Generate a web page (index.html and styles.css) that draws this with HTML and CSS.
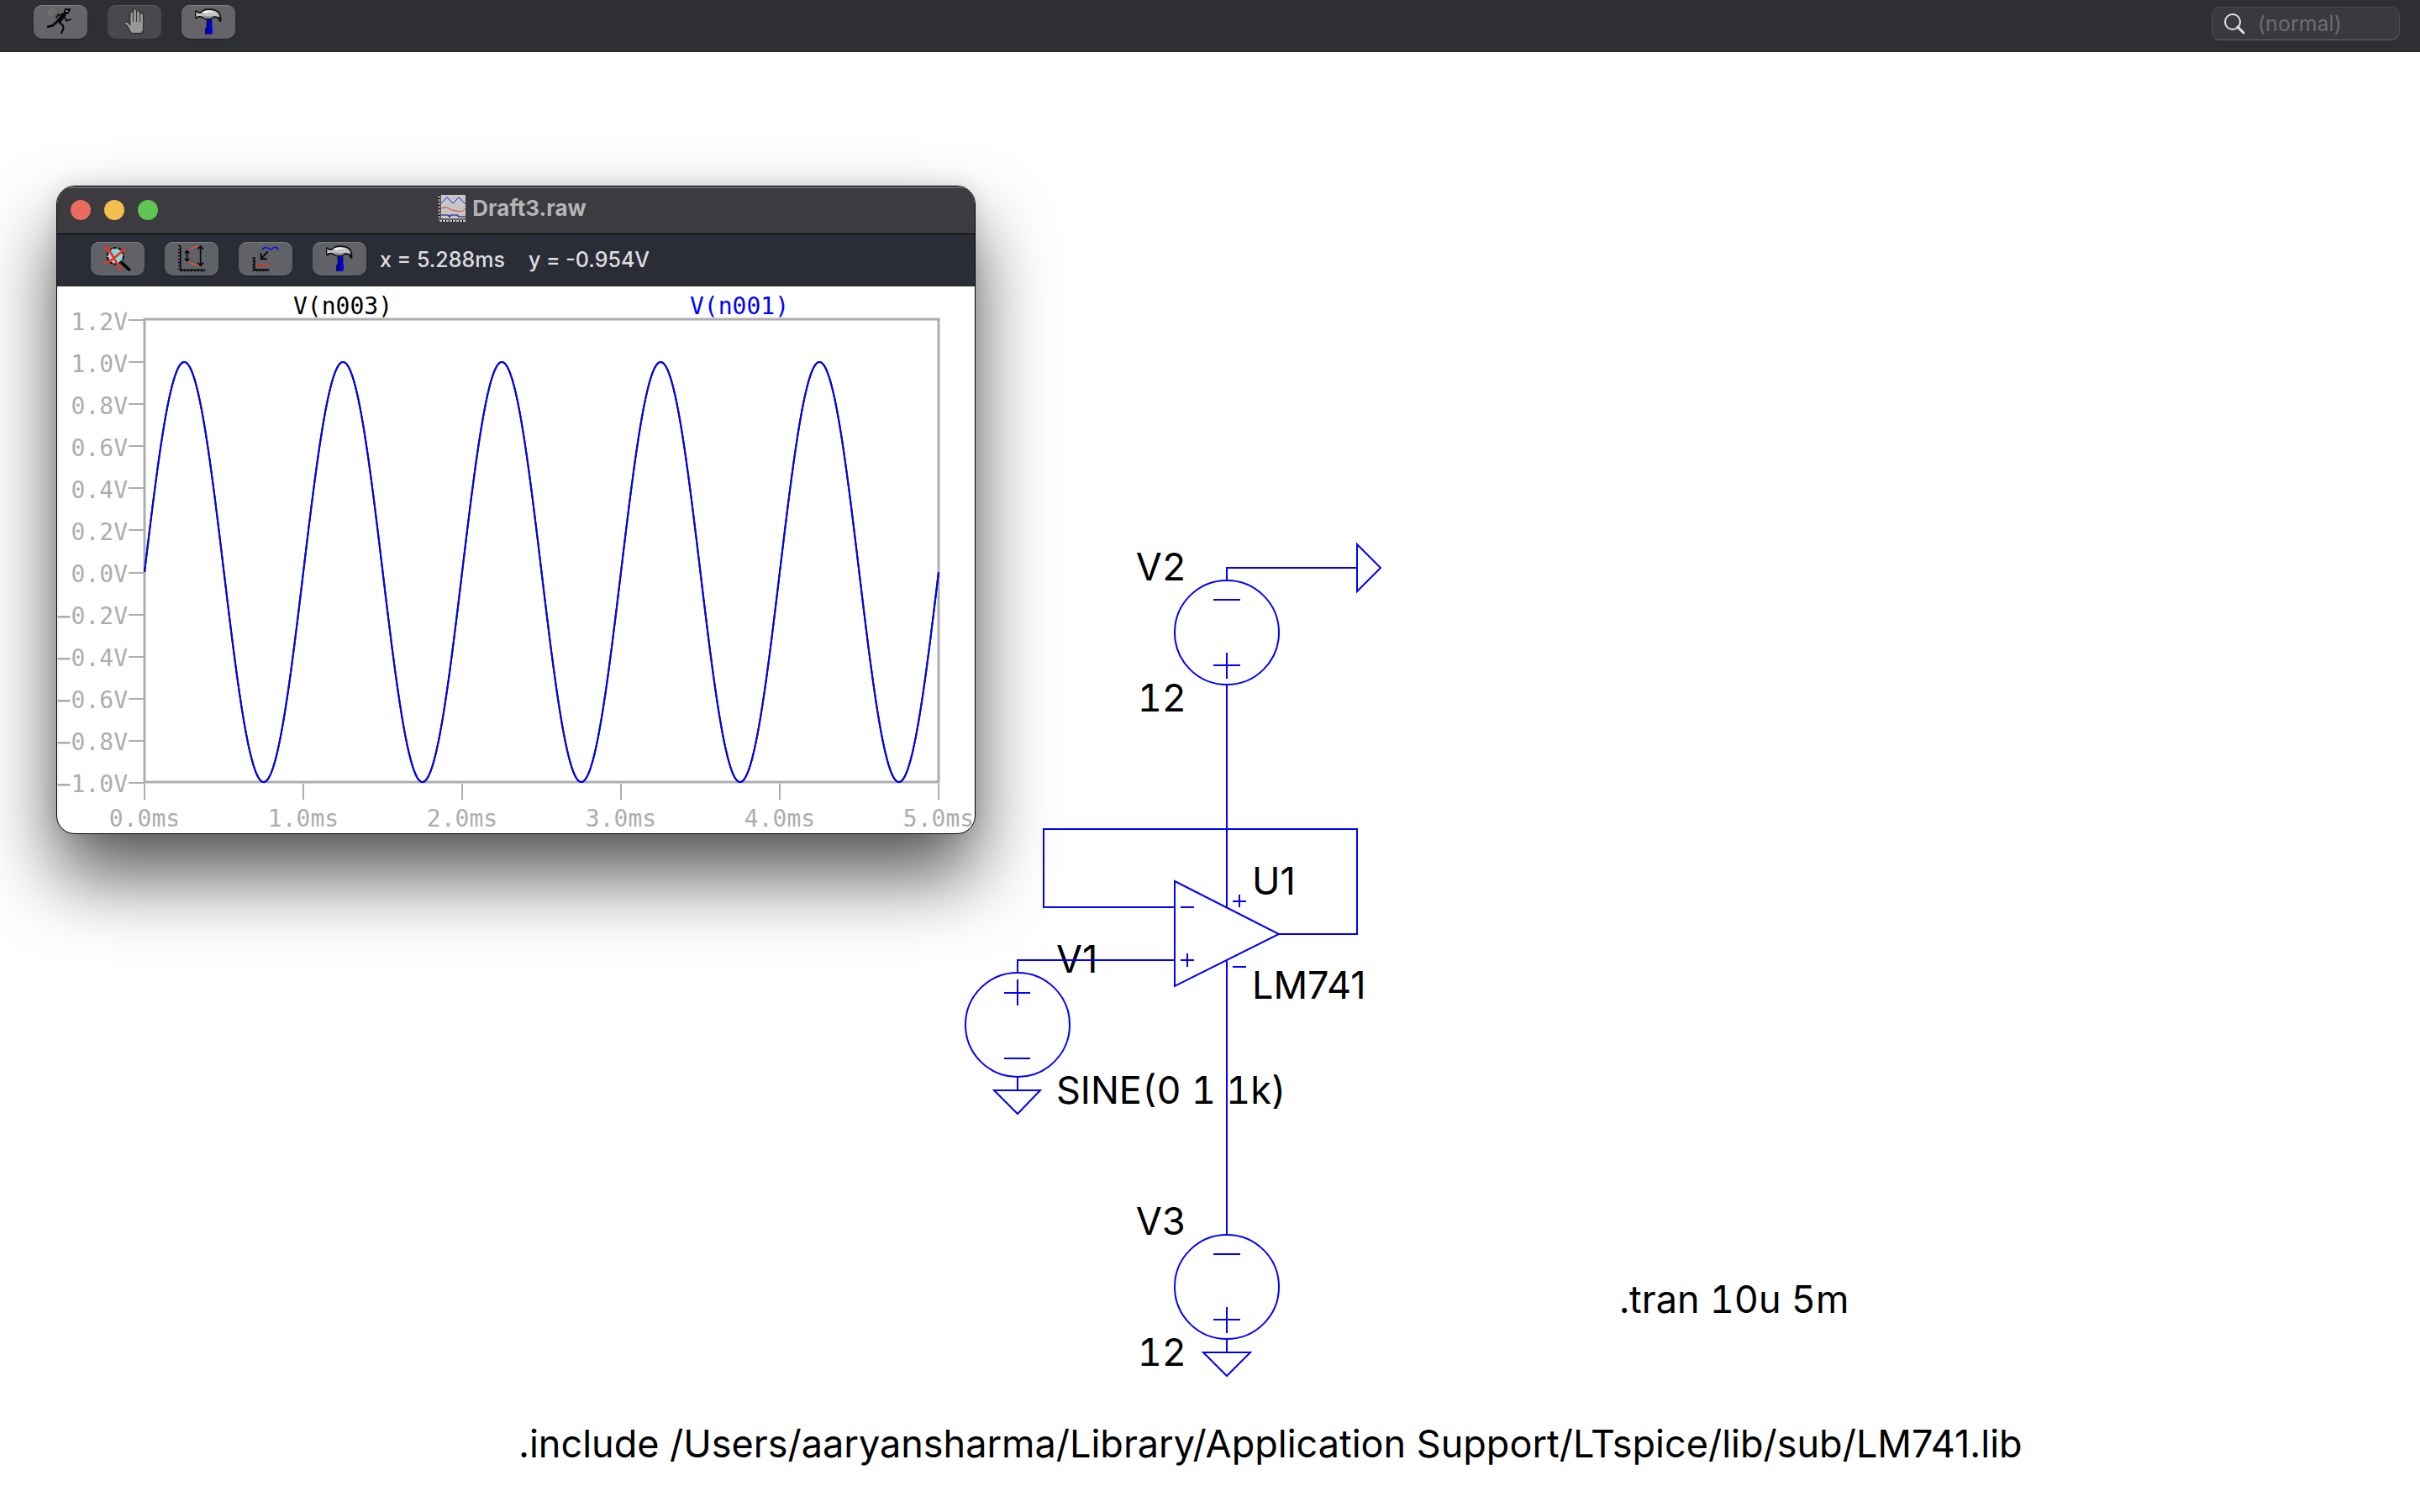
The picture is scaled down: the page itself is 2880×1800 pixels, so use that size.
FILE: index.html
```html
<!DOCTYPE html>
<html lang="en">
<head>
<meta charset="utf-8">
<meta name="viewport" content="width=device-width, initial-scale=1">
<title>LTspice</title>
<link rel="stylesheet" href="styles.css">
</head>
<body>
<svg class="defs" aria-hidden="true">
  <symbol id="icon-hammer" viewBox="0 0 96 96">
    <path d="M41 40H61V92H36V72L41 66Z" fill="#00008c"/>
    <path d="M51 40H57V66L63 70V88H51Z" fill="#0000f0"/>
    <path d="M0 11Q0 6 6 7L11 12H22Q30 0 50 1Q72 0 84 10Q96 22 94 47H87L80 34H66Q62 40 54 40H34Q28 34 20 32H11L6 38Q0 38 0 32Z" fill="#111"/>
    <path d="M4 12L10 17H23Q32 5 50 6Q70 6 80 14Q88 20 89 32Q80 26 66 28Q62 35 52 35H36Q28 27 20 27H10L4 32Z" fill="#c4c4c4"/>
    <path d="M25 14Q32 7 48 8Q64 8 72 13Q50 12 38 17Z" fill="#f6f6f6"/>
    <path d="M28 25Q46 31 66 26Q62 35 52 35H38Z" fill="#8c8c8c"/>
  </symbol>
</svg>

<header class="topbar">
  <div class="tools">
    <button class="tool" type="button" aria-label="Run">
      <svg viewBox="0 0 96 96" fill="none" stroke="#060606">
        <path d="M63 1H86L74 21H58Z" fill="#060606" stroke="none"/>
        <path d="M67 7H74V13H67Z" fill="#aaa" stroke="none"/>
        <path d="M62 20L40 48" stroke-width="16"/>
        <path d="M56 24L40 22L31 35" stroke-width="5"/>
        <path d="M62 31L70 44L86 39" stroke-width="5"/>
        <path d="M38 45L21 61L0 66" stroke-width="8"/>
        <path d="M42 48L58 62V74L50 90" stroke-width="6"/>
        <path d="M2 13Q18 3 27 22M10 3Q24 -2 33 13M0 24Q11 13 18 27" stroke="#8b8b8e" stroke-width="3"/>
      </svg>
    </button>
    <button class="tool" type="button" aria-label="Halt" disabled>
      <svg viewBox="0 0 96 96">
        <path d="M36 92L20 66L8 52Q13 44 22 48L29 54V16Q31 8 39 10V6Q48 -2 56 8Q65 3 69 14Q80 12 82 24V84L74 92Z" fill="#303134"/>
        <path d="M38 87L24 62L12 52Q17 48 24 52L34 62V16Q39 10 42 17V48H45V7Q50 2 54 8V48H57V12Q63 8 66 15V49H69V20Q76 16 78 24V79L71 87Z" fill="#97979a"/>
      </svg>
    </button>
    <button class="tool" type="button" aria-label="Control panel"><svg><use href="#icon-hammer"/></svg></button>
  </div>
  <label class="search">
    <svg viewBox="0 0 28 28" fill="none" stroke="#e2e2e4"><circle cx="12" cy="12" r="9" stroke-width="2"/><path d="M18 18L25 25" stroke-width="3" stroke-linecap="round"/></svg>
    <input type="text" placeholder="(normal)" aria-label="Search">
  </label>
</header>

<main>
  <svg class="schematic" viewBox="0 62 2880 1738">
    <g class="net-text">
      <text x="1490" y="1065">U1</text>
      <text x="1490" y="1189">LM741</text>
      <text x="1257" y="1158">V1</text>
      <text x="617" y="1735">.include /Users/aaryansharma/Library/Application Support/LTspice/lib/sub/LM741.lib</text>
    </g>
    <g class="net-text values">
      <text x="1412" y="691" text-anchor="end">V2</text>
      <text x="1412" y="847" text-anchor="end">12</text>
      <text x="1257" y="1314">SINE(0 1 1k)</text>
      <text x="1412" y="1470" text-anchor="end">V3</text>
      <text x="1412" y="1626" text-anchor="end">12</text>
      <text x="1927" y="1563">.tran 10u 5m</text>
    </g>
    <g class="wires">
      <path d="M1460 691V676H1615M1615 648V704L1643 676Z"/>
      <circle cx="1460" cy="753" r="62"/>
      <path d="M1444 714H1476M1444 792H1476M1460 777V808M1460 816V1080"/>
      <path d="M1398 1080H1242V987H1615V1112H1522"/>
      <path d="M1398 1049V1174L1522 1112Z"/>
      <path d="M1405 1080H1421M1405 1143H1421M1413 1135V1151M1467 1073H1483M1475 1065V1080M1467 1151H1483"/>
      <path d="M1398 1143H1211V1158"/>
      <circle cx="1211" cy="1220" r="62"/>
      <path d="M1195 1182H1226M1211 1166V1197M1195 1260H1226M1211 1283V1298M1183 1298H1238L1211 1326Z"/>
      <path d="M1460 1143V1470"/>
      <circle cx="1460" cy="1532" r="62"/>
      <path d="M1444 1493H1476M1444 1571H1476M1460 1556V1587M1460 1595V1610M1432 1610H1488L1460 1638Z"/>
    </g>
  </svg>

  <section class="window" aria-label="Draft3.raw">
    <div class="titlebar">
      <div class="lights">
        <button class="light close" type="button" aria-label="Close"></button>
        <button class="light minimise" type="button" aria-label="Minimise"></button>
        <button class="light zoom" type="button" aria-label="Zoom"></button>
      </div>
      <h1 class="title">
        <svg viewBox="0 0 32 32" fill="none">
          <path d="M0 0H32V32H0Z" fill="#c6c6c6"/>
          <path d="M3 10L10 3L17 10L24 3L32 11" stroke="#2020f0"/>
          <path d="M3 16C12 13 12 18 20 19S28 20 32 16" stroke="#f03020"/>
          <path d="M3 24H12V26H14V24H23V26H32" stroke="#00008c"/>
          <path d="M2 0V29H32" stroke="#000"/>
          <path d="M1 0V32M0 31H32" stroke="#000" stroke-width="2" stroke-dasharray="1 3"/>
        </svg>
        Draft3.raw
      </h1>
    </div>
    <div class="plotbar">
      <div class="tools">
        <button class="tool" type="button" aria-label="Zoom to fit">
          <svg viewBox="0 0 96 96" fill="none">
            <circle cx="40" cy="38" r="29" fill="#b8c4c8" stroke="#0b0b0b" stroke-width="6" stroke-dasharray="14 4"/>
            <path d="M24 26L38 14L48 18L32 38ZM40 50L58 34L62 46L48 58Z" fill="#5fe8f0"/>
            <path d="M62 62L92 90" stroke="#050505" stroke-width="11"/>
            <path d="M2 8H12L60 88M0 64L20 58L76 12" stroke="#e83424" stroke-width="8"/>
            <path d="M4 6L20 20" stroke="#e83424" stroke-width="12"/>
          </svg>
        </button>
        <button class="tool" type="button" aria-label="Autorange y axis">
          <svg viewBox="0 0 96 96" fill="none" stroke="#080808" stroke-width="5">
            <path d="M8 0V88H96"/>
            <path d="M3 0V96" stroke-width="6" stroke-dasharray="4 8"/>
            <path d="M10 92H96" stroke-width="6" stroke-dasharray="4 8"/>
            <path d="M32 20V56M24 28L32 20L40 28M24 48L32 56L40 48"/>
            <path d="M80 4V72M70 14L80 3L90 14M70 62L80 73L90 62"/>
            <path d="M38 16L72 1M38 60L72 75" stroke="#ea4a2c"/>
          </svg>
        </button>
        <button class="tool" type="button" aria-label="Add trace">
          <svg viewBox="0 0 96 96" fill="none" stroke="#080808" stroke-width="6">
            <path d="M8 42V88H60"/>
            <path d="M3 44V92M14 92H60" stroke-width="5" stroke-dasharray="4 7"/>
            <path d="M56 22L34 46M32 28V49H54"/>
            <path d="M12 74H20L28 68H38L44 74H52L59 68" stroke="#dd3428" stroke-width="5"/>
            <path d="M36 16L44 8H54L62 14H70L78 8H88L95 16" stroke="#1212e4" stroke-width="5"/>
          </svg>
        </button>
        <button class="tool" type="button" aria-label="Control panel"><svg><use href="#icon-hammer"/></svg></button>
      </div>
      <output class="readout"><span>x = 5.288ms</span><span>y = -0.954V</span></output>
    </div>
    <svg class="plot" viewBox="68 341 1092 651">
      <g class="legend">
        <text x="349" y="374">V(n003)</text>
        <text class="trace-name" x="821" y="374">V(n001)</text>
      </g>
      <path class="ticks" d="M153 381H172M153 431H172M153 481H172M153 531H172M153 581H172M153 631H172M153 682H172M153 732H172M153 782H172M153 832H172M153 882H172M153 932H172M172 933V952M361 933V952M550 933V952M739 933V952M928 933V952M1117 933V952"/>
      <rect class="frame" x="172" y="380" width="945" height="551"/>
      <g class="axis" text-anchor="end">
        <text x="152" y="393">1.2V</text>
        <text x="152" y="443">1.0V</text>
        <text x="152" y="493">0.8V</text>
        <text x="152" y="543">0.6V</text>
        <text x="152" y="593">0.4V</text>
        <text x="152" y="643">0.2V</text>
        <text x="152" y="693">0.0V</text>
        <text x="152" y="743">−0.2V</text>
        <text x="152" y="793">−0.4V</text>
        <text x="152" y="843">−0.6V</text>
        <text x="152" y="893">−0.8V</text>
        <text x="152" y="943">−1.0V</text>
      </g>
      <g class="axis" text-anchor="middle">
        <text x="172" y="984">0.0ms</text>
        <text x="361" y="984">1.0ms</text>
        <text x="550" y="984">2.0ms</text>
        <text x="739" y="984">3.0ms</text>
        <text x="928" y="984">4.0ms</text>
        <text x="1117" y="984">5.0ms</text>
      </g>
      <path class="trace trace-in"/>
      <path class="trace trace-out"/>
    </svg>
  </section>
</main>
<script src="plot.js"></script>
</body>
</html>
```
FILE: plot.js
```js
// 1 V, 1 kHz sine over 5 ms, drawn in the plot's own coordinates.
// The buffer follows its input, so both traces share the same points.
const points = [];
for (let x = 0; x <= 945; x += 1) {
  const y = 681 - 250 * Math.sin((x / 189) * 2 * Math.PI);
  points.push((172 + x) + ' ' + y.toFixed(2));
}
document.querySelectorAll('.trace').forEach((trace) => {
  trace.setAttribute('d', 'M' + points.join('L'));
});
```
FILE: styles.css
```css
* { box-sizing: border-box; }

body {
  margin: 0;
  background: #fff;
  color: #000;
  font-family: "Inter", "Liberation Sans", sans-serif;
  font-size: 25px;
  overflow-x: hidden;
}

.defs { position: absolute; width: 0; height: 0; }

.topbar {
  display: flex;
  justify-content: space-between;
  align-items: flex-start;
  height: 62px;
  padding: 6px 24px 0 40px;
  background: #2e2f34;
  border-bottom: 1px solid #232328;
}

.tools { display: flex; gap: 24px; }

.tool {
  display: flex;
  justify-content: center;
  width: 64px;
  height: 40px;
  padding: 4px 0 0;
  border: 0;
  border-radius: 10px;
  background: #646469;
  box-shadow: inset 0 1px #7e7e83, 0 1px 2px rgba(0, 0, 0, .3);
}
.tool:disabled { background: #48494d; box-shadow: inset 0 1px #57585c; }
.tool svg { width: 32px; height: 32px; }

.search {
  display: flex;
  align-items: center;
  gap: 14px;
  width: 224px;
  height: 40px;
  margin-top: 2px;
  padding: 0 12px;
  border: 1px solid #4b4b50;
  border-bottom-color: #68686c;
  border-radius: 10px;
  background: #39393e;
}
.search svg { flex: none; width: 28px; height: 28px; }
.search input {
  flex: 1;
  min-width: 0;
  padding: 0;
  border: 0;
  outline: 0;
  background: none;
  color: #e2e2e4;
  font: inherit;
}
.search input::placeholder { color: #6d6d72; opacity: 1; }

main { position: relative; }

.schematic { display: block; width: 100%; height: auto; }
.net-text { font-size: 45px; }
.values { font-variant-numeric: tabular-nums; }
.wires { fill: none; stroke: #00f; stroke-width: 2; }

.window {
  position: absolute;
  left: 67px;
  top: 159px;
  width: 1094px;
  overflow: hidden;
  border: 1px solid #000;
  border-radius: 22px;
  background: #fff;
  box-shadow: 0 50px 90px rgba(0, 0, 0, .66), 0 0 24px rgba(0, 0, 0, .1);
}

.titlebar {
  display: grid;
  grid-template-columns: 1fr auto 1fr;
  align-items: center;
  height: 57px;
  padding: 0 16px;
  background: #3b3b40;
  border-bottom: 1px solid #000;
  box-shadow: inset 0 2px #6a6b6e;
}
.lights { display: flex; gap: 16px; }
.light { width: 24px; height: 24px; padding: 0; border: 0; border-radius: 50%; }
.close { background: #ec6a5e; }
.minimise { background: #f5bf4f; }
.zoom { background: #61c554; }

.title {
  display: flex;
  align-items: center;
  gap: 8px;
  margin: 0 8px 4px 0;
  color: #b4b4b7;
  font-size: 26px;
  font-weight: 700;
  line-height: 32px;
}
.title svg { width: 32px; height: 32px; }

.plotbar {
  display: flex;
  align-items: center;
  gap: 16px;
  height: 62px;
  padding: 0 40px 4px;
  background: #2b2d36;
}
.plotbar .tool { background: #606267; }
.readout { display: flex; gap: 28px; padding-top: 2px; color: #dedee0; font-weight: 500; }

.plot {
  display: block;
  width: 100%;
  height: auto;
  font-family: "DejaVu Sans Mono", monospace;
  font-size: 28px;
}
.trace-name { fill: #00f; }
.axis { fill: #adadad; }
.ticks { fill: none; stroke: #adadad; stroke-width: 2; }
.frame { fill: none; stroke: #adadad; stroke-width: 3; }
.trace { fill: none; stroke-width: 2; }
.trace-in { stroke: #000; }
.trace-out { stroke: #00f; }
```
